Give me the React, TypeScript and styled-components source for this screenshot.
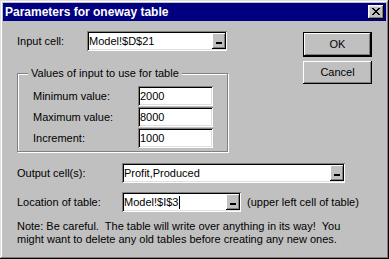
import React from "react";
import styled, { createGlobalStyle } from "styled-components";

const Global = createGlobalStyle`
  html, body { margin: 0; padding: 0; background: #c0c0c0; }
  body { font-family: "Liberation Sans", Arial, sans-serif; font-size: 11px; color: #000; }
  * { box-sizing: border-box; }
`;

const Window = styled.div`
  width: 389px;
  height: 259px;
  padding: 3px;
  background: #c0c0c0;
  box-shadow: inset -1px -1px #000, inset 1px 1px #dfdfdf, inset -2px -2px #808080, inset 2px 2px #fff;
  display: flex;
  flex-direction: column;
`;

const TitleBar = styled.div`
  height: 18px;
  background: #000080;
  color: #fff;
  display: flex;
  align-items: center;
  padding: 0 2px 0 2px;
`;

const TitleText = styled.div`
  flex: 1;
  font-weight: bold;
  font-size: 12px;
  line-height: 14px;
`;

const CloseButton = styled.div`
  width: 16px;
  height: 14px;
  background: #c0c0c0;
  box-shadow: inset -1px -1px #000, inset 1px 1px #fff, inset -2px -2px #808080, inset 2px 2px #dfdfdf;
  display: flex;
  align-items: center;
  justify-content: center;
  padding-bottom: 1px;
  padding-right: 1px;
`;

const Body = styled.div`
  padding: 10px 14px 0 14px;
  display: flex;
  flex-direction: column;
`;

const TopSection = styled.div`
  display: flex;
  align-items: flex-start;
`;

const LeftColumn = styled.div`
  width: 211px;
  display: flex;
  flex-direction: column;
`;

const ButtonColumn = styled.div`
  margin-left: auto;
  margin-top: 1px;
  display: flex;
  flex-direction: column;
  gap: 4px;
`;

const Row = styled.div<{ $mt?: number }>`
  display: flex;
  align-items: center;
  height: 20px;
  margin-top: ${(p) => p.$mt ?? 0}px;
`;

const Label = styled.div<{ $w: number }>`
  width: ${(p) => p.$w}px;
  flex-shrink: 0;
  line-height: 13px;
`;

const Field = styled.div<{ $w: number }>`
  width: ${(p) => p.$w}px;
  height: 20px;
  background: #fff;
  box-shadow: inset 1px 1px #808080, inset -1px -1px #fff, inset 2px 2px #000, inset -2px -2px #dfdfdf;
  padding: 2px 1px 2px 2px;
  display: flex;
  align-items: center;
`;

const FieldText = styled.div`
  flex: 1;
  padding-left: 0px;
  line-height: 13px;
  white-space: pre;
  display: flex;
  align-items: center;
`;

const Caret = styled.span`
  display: inline-block;
  width: 1px;
  height: 13px;
  background: #000;
  margin-left: 1px;
`;

const DropButton = styled.div`
  width: 14px;
  height: 16px;
  background: #c0c0c0;
  box-shadow: inset -1px -1px #000, inset 1px 1px #fff, inset -2px -2px #808080;
  display: flex;
  flex-direction: column;
  align-items: center;
  justify-content: flex-end;
  padding-bottom: 5px;
  padding-right: 1px;
`;

const DropBar = styled.div`
  width: 6px;
  height: 2px;
  background: #000;
`;

const PushButton = styled.div<{ $default?: boolean }>`
  width: 69px;
  height: ${(p) => (p.$default ? 25 : 23)}px;
  background: #c0c0c0;
  display: flex;
  align-items: center;
  justify-content: center;
  line-height: 13px;
  box-shadow: ${(p) =>
    p.$default
      ? "inset 0 0 0 1px #000, inset -2px -2px #000, inset 2px 2px #fff, inset -3px -3px #808080"
      : "inset -1px -1px #000, inset 1px 1px #fff, inset -2px -2px #808080"};
`;

const GroupBox = styled.div`
  margin-top: 22px;
  border: 1px solid #808080;
  box-shadow: inset 1px 1px #fff, 1px 1px #fff;
  padding: 0 14px 3px 0;
  display: flex;
  flex-direction: column;
`;

const GroupTitle = styled.div`
  margin: -7px 0 0 10px;
  padding: 0 3px;
  width: fit-content;
  background: #c0c0c0;
  line-height: 13px;
`;

const GroupRows = styled.div`
  margin-top: 6px;
  padding-left: 15px;
  display: flex;
  flex-direction: column;
  gap: 1px;
`;

const Hint = styled.div`
  margin-left: 6px;
  line-height: 13px;
  white-space: nowrap;
`;

const Note = styled.div`
  margin-top: 8px;
  line-height: 13px;
  white-space: pre;
`;

const CloseGlyph = () => (
  <svg width="8" height="7" viewBox="0 0 8 7" shapeRendering="crispEdges">
    <path d="M0 0h2v1H0zM6 0h2v1H6zM1 1h2v1H1zM5 1h2v1H5zM2 2h4v1H2zM3 3h2v1H3zM2 4h4v1H2zM1 5h2v1H1zM5 5h2v1H5zM0 6h2v1H0zM6 6h2v1H6z" fill="#000" />
  </svg>
);

const Drop = () => (
  <DropButton>
    <DropBar />
  </DropButton>
);

export default function App() {
  return (
    <>
      <Global />
      <Window>
        <TitleBar>
          <TitleText>Parameters for oneway table</TitleText>
          <CloseButton>
            <CloseGlyph />
          </CloseButton>
        </TitleBar>
        <Body>
          <TopSection>
            <LeftColumn>
              <Row>
                <Label $w={70}>Input cell:</Label>
                <Field $w={140}>
                  <FieldText>Model!$D$21</FieldText>
                  <Drop />
                </Field>
              </Row>
              <GroupBox>
                <GroupTitle>Values of input to use for table</GroupTitle>
                <GroupRows>
                  <Row>
                    <Label $w={105}>Minimum value:</Label>
                    <Field $w={75}>
                      <FieldText>2000</FieldText>
                    </Field>
                  </Row>
                  <Row>
                    <Label $w={105}>Maximum value:</Label>
                    <Field $w={75}>
                      <FieldText>8000</FieldText>
                    </Field>
                  </Row>
                  <Row>
                    <Label $w={105}>Increment:</Label>
                    <Field $w={75}>
                      <FieldText>1000</FieldText>
                    </Field>
                  </Row>
                </GroupRows>
              </GroupBox>
            </LeftColumn>
            <ButtonColumn>
              <PushButton $default>OK</PushButton>
              <PushButton>Cancel</PushButton>
            </ButtonColumn>
          </TopSection>
          <Row $mt={11}>
            <Label $w={105}>Output cell(s):</Label>
            <Field $w={223}>
              <FieldText>Profit,Produced</FieldText>
              <Drop />
            </Field>
          </Row>
          <Row $mt={9}>
            <Label $w={105}>Location of table:</Label>
            <Field $w={119}>
              <FieldText>
                Model!$I$3
                <Caret />
              </FieldText>
              <Drop />
            </Field>
            <Hint>(upper left cell of table)</Hint>
          </Row>
          <Note>
            {"Note: Be careful.  The table will write over anything in its way!  You\nmight want to delete any old tables before creating any new ones."}
          </Note>
        </Body>
      </Window>
    </>
  );
}
